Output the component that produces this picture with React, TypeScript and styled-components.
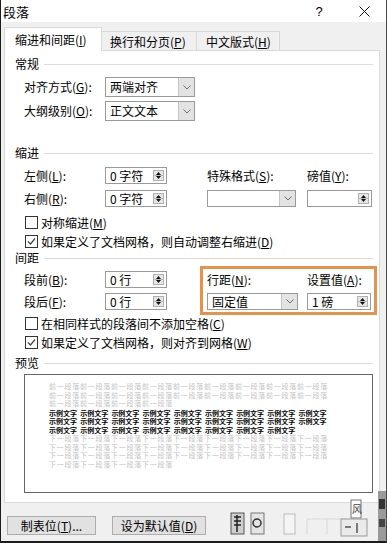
import React from "react";
import styled, { createGlobalStyle, css } from "styled-components";

const GlobalStyle = createGlobalStyle`
  html, body { margin: 0; padding: 0; background: #fff; }
  body { font-family: "Noto Sans CJK SC", "Noto Sans", sans-serif; }
`;

const Window = styled.div`
  width: 387px;
  height: 543px;
  box-sizing: border-box;
  border-left: 1px solid #1c1c1c;
  border-right: 1px solid #4a4a4a;
  border-bottom: 2px solid #1c1c1c;
  background: #f0f0f0;
  display: flex;
  flex-direction: column;
  overflow: hidden;
  font-family: "Noto Sans CJK SC", "Noto Sans", sans-serif;
  font-size: 12px;
  color: #000;
`;

const TitleBar = styled.div`
  height: 22px;
  flex: none;
  background: #fff;
  display: flex;
  align-items: center;
  padding-left: 2px;
  font-size: 13px;
`;

const TitleText = styled.span`
  flex: 1;
`;

const TitleButton = styled.div<{ $w: number }>`
  width: ${(p) => p.$w}px;
  height: 22px;
  display: flex;
  align-items: center;
  justify-content: center;
  font-size: 13px;
  font-family: "Liberation Sans", sans-serif;
`;

const Body = styled.div`
  flex: 1;
  display: flex;
  flex-direction: column;
  padding: 5px 6px 0 3px;
  position: relative;
`;

const TabRow = styled.div`
  display: flex;
  align-items: flex-end;
  height: 24px;
  margin-bottom: -1px;
  position: relative;
  z-index: 1;
`;

const Tab = styled.div<{ $active?: boolean; $w: number; $pl: number }>`
  box-sizing: border-box;
  width: ${(p) => p.$w}px;
  padding-left: ${(p) => p.$pl}px;
  display: flex;
  align-items: center;
  white-space: nowrap;
  ${(p) =>
    p.$active
      ? css`
          height: 24px;
          background: #fff;
          border: 1px solid #d9d9d9;
          border-bottom: none;
        `
      : css`
          height: 19px;
          margin-bottom: 1px;
          background: #f0f0f0;
          border-top: 1px solid #d9d9d9;
          border-right: 1px solid #d9d9d9;
        `}
`;

const Panel = styled.div`
  height: 453px;
  box-sizing: border-box;
  background: #fff;
  border: 1px solid #d9d9d9;
  padding: 6px 6px 0 10px;
  display: flex;
  flex-direction: column;
`;

const SectionTitle = styled.div<{ $mt?: number }>`
  display: flex;
  align-items: center;
  gap: 5px;
  height: 14px;
  line-height: 14px;
  margin-top: ${(p) => p.$mt ?? 0}px;
  &::after {
    content: "";
    flex: 1;
    height: 1px;
    background: #dcdcdc;
  }
`;

const FormGrid = styled.div<{ $row: number; $gap: number; $mt: number }>`
  display: grid;
  grid-template-columns: 81px 102px 100px 65px;
  grid-auto-rows: ${(p) => p.$row}px;
  row-gap: ${(p) => p.$gap}px;
  align-items: center;
  margin: ${(p) => p.$mt}px 0 0 9px;
  position: relative;
`;

const Label = styled.div`
  white-space: nowrap;
  line-height: 14px;
`;

const Field = styled.div<{ $w: number }>`
  width: ${(p) => p.$w}px;
  height: 100%;
  box-sizing: border-box;
  border: 1px solid #9a9a9a;
  background: #fff;
  display: flex;
  align-items: center;
`;

const FieldValue = styled.span`
  flex: 1;
  padding-left: 4px;
  white-space: pre;
  line-height: 14px;
`;

const DropButton = styled.div`
  width: 15px;
  align-self: stretch;
  background: #e3e3e3;
  border-left: 1px solid #c4c4c4;
  display: flex;
  align-items: center;
  justify-content: center;
`;

const SpinButtons = styled.div`
  width: 11px;
  height: 11px;
  margin-right: 2px;
  border: 1px solid #b0b0b0;
  background: #e6e6e6;
  display: flex;
  flex-direction: column;
  align-items: center;
  justify-content: space-around;
  box-sizing: border-box;
  padding: 1px 0;
  position: relative;
  &::after {
    content: "";
    position: absolute;
    left: 0;
    right: 0;
    top: 4px;
    height: 1px;
    background: #b8b8b8;
  }
`;

/* orange annotation drawn over the line-spacing controls */
const Highlight = styled.div`
  position: absolute;
  left: 176px;
  top: -5px;
  width: 177px;
  height: 49px;
  box-sizing: border-box;
  border: 3px solid #e8914a;
  pointer-events: none;
`;

const CheckRow = styled.label<{ $mt?: number }>`
  display: flex;
  align-items: center;
  height: 16px;
  margin: ${(p) => p.$mt ?? 3}px 0 0 10px;
  white-space: nowrap;
`;

const Box = styled.span`
  width: 13px;
  height: 13px;
  box-sizing: border-box;
  border: 1px solid #333;
  background: #fff;
  margin-right: 3px;
  display: flex;
  align-items: center;
  justify-content: center;
`;

const Preview = styled.div`
  margin: 4px 0 0 9px;
  height: 119px;
  box-sizing: border-box;
  border: 1px solid #666;
  background: #fff;
  padding: 7px 0 0 24px;
  font-size: 7px;
  line-height: 8.5px;
  white-space: nowrap;
`;

const PreviewLine = styled.div<{ $tone: "dim" | "ink"; $mt?: number }>`
  color: ${(p) => (p.$tone === "dim" ? "#c4c4c4" : "#000")};
  letter-spacing: ${(p) => (p.$tone === "dim" ? 0.75 : 0)}px;
  margin-top: ${(p) => p.$mt ?? 0}px;
  display: flex;
`;

const Sample = styled.span`
  width: 31.2px;
  flex: none;
  font-weight: 700;
`;

const Footer = styled.div`
  display: flex;
  align-items: center;
  gap: 16px;
  padding: 13px 0 0 3px;
`;

const FooterButton = styled.div<{ $w: number }>`
  width: ${(p) => p.$w}px;
  height: 19px;
  box-sizing: border-box;
  background: #e1e1e1;
  border: 1px solid #adadad;
  display: flex;
  align-items: center;
  justify-content: center;
  white-space: nowrap;
`;

const Artifact = styled.svg`
  position: absolute;
  right: -6px;
  bottom: 0;
`;

function Key({ k }: { k: string }) {
  return (
    <>
      (<u>{k}</u>)
    </>
  );
}

function Chevron() {
  return (
    <svg width="8" height="5" viewBox="0 0 8 5">
      <polyline points="0.5,0.5 4,4 7.5,0.5" fill="none" stroke="#6d6d6d" strokeWidth="1" />
    </svg>
  );
}

function Select({ w, value = "" }: { w: number; value?: string }) {
  return (
    <Field $w={w}>
      <FieldValue>{value}</FieldValue>
      <DropButton>
        <Chevron />
      </DropButton>
    </Field>
  );
}

function Spin({ w, value = "" }: { w: number; value?: string }) {
  return (
    <Field $w={w}>
      <FieldValue>{value}</FieldValue>
      <SpinButtons>
        <svg width="5" height="3" viewBox="0 0 5 3">
          <polygon points="2.5,0 5,3 0,3" fill="#111" />
        </svg>
        <svg width="5" height="3" viewBox="0 0 5 3">
          <polygon points="0,0 5,0 2.5,3" fill="#111" />
        </svg>
      </SpinButtons>
    </Field>
  );
}

function Check({ checked, children, mt }: { checked?: boolean; children: React.ReactNode; mt?: number }) {
  return (
    <CheckRow $mt={mt}>
      <Box>
        {checked && (
          <svg width="11" height="11" viewBox="0 0 11 11">
            <polyline points="2,5.5 4.5,8 9,2.5" fill="none" stroke="#444" strokeWidth="1.2" />
          </svg>
        )}
      </Box>
      {children}
    </CheckRow>
  );
}

const before = "前一段落".repeat(9);
const after = "下一段落".repeat(9);

export default function App() {
  return (
    <>
      <GlobalStyle />
      <Window>
        <TitleBar>
          <TitleText>段落</TitleText>
          <TitleButton $w={46}>?</TitleButton>
          <TitleButton $w={44}>
            <svg width="11" height="11" viewBox="0 0 11 11">
              <path d="M0.5 0.5 L10.5 10.5 M10.5 0.5 L0.5 10.5" stroke="#111" strokeWidth="1" />
            </svg>
          </TitleButton>
        </TitleBar>
        <Body>
          <TabRow>
            <Tab $active $w={98} $pl={10}>
              缩进和间距<Key k="I" />
            </Tab>
            <Tab $w={95} $pl={8}>
              换行和分页<Key k="P" />
            </Tab>
            <Tab $w={83} $pl={9}>
              中文版式<Key k="H" />
            </Tab>
          </TabRow>
          <Panel>
            <SectionTitle>常规</SectionTitle>
            <FormGrid $row={20} $gap={4} $mt={6}>
              <Label>
                对齐方式<Key k="G" />:
              </Label>
              <Select w={90} value="两端对齐" />
              <span />
              <span />
              <Label>
                大纲级别<Key k="O" />:
              </Label>
              <Select w={90} value="正文文本" />
            </FormGrid>

            <SectionTitle $mt={25}>缩进</SectionTitle>
            <FormGrid $row={17} $gap={6} $mt={7}>
              <Label>
                左侧<Key k="L" />:
              </Label>
              <Spin w={62} value="0 字符" />
              <Label>
                特殊格式<Key k="S" />:
              </Label>
              <Label>
                磅值<Key k="Y" />:
              </Label>
              <Label>
                右侧<Key k="R" />:
              </Label>
              <Spin w={62} value="0 字符" />
              <Select w={89} />
              <Spin w={65} />
            </FormGrid>
            <Check mt={7}>
              对称缩进<Key k="M" />
            </Check>
            <Check checked>
              如果定义了文档网格，则自动调整右缩进<Key k="D" />
            </Check>

            <SectionTitle $mt={2}>间距</SectionTitle>
            <FormGrid $row={17} $gap={5} $mt={6}>
              <Label>
                段前<Key k="B" />:
              </Label>
              <Spin w={62} value="0 行" />
              <Label>
                行距<Key k="N" />:
              </Label>
              <Label>
                设置值<Key k="A" />:
              </Label>
              <Label>
                段后<Key k="F" />:
              </Label>
              <Spin w={62} value="0 行" />
              <Select w={91} value="固定值" />
              <Spin w={64} value="1 磅" />
              <Highlight />
            </FormGrid>
            <Check mt={5}>
              在相同样式的段落间不添加空格<Key k="C" />
            </Check>
            <Check checked>
              如果定义了文档网格，则对齐到网格<Key k="W" />
            </Check>

            <SectionTitle $mt={6}>预览</SectionTitle>
            <Preview>
              <PreviewLine $tone="dim">{before}</PreviewLine>
              <PreviewLine $tone="dim">{before}</PreviewLine>
              <PreviewLine $tone="dim">{"前一段落".repeat(4)}</PreviewLine>
              <PreviewLine $tone="ink" $mt={1}>
                {Array.from({ length: 9 }, (_, i) => (
                  <Sample key={i}>示例文字</Sample>
                ))}
              </PreviewLine>
              <PreviewLine $tone="ink">
                {Array.from({ length: 9 }, (_, i) => (
                  <Sample key={i}>示例文字</Sample>
                ))}
              </PreviewLine>
              <PreviewLine $tone="ink">
                {Array.from({ length: 8 }, (_, i) => (
                  <Sample key={i}>示例文字</Sample>
                ))}
              </PreviewLine>
              <PreviewLine $tone="dim">{after}</PreviewLine>
              <PreviewLine $tone="dim">{after}</PreviewLine>
              <PreviewLine $tone="dim">{after}</PreviewLine>
              <PreviewLine $tone="dim">{"下一段落".repeat(4)}</PreviewLine>
            </Preview>
          </Panel>
          <Footer>
            <FooterButton $w={89}>
              制表位<Key k="T" />...
            </FooterButton>
            <FooterButton $w={94}>
              设为默认值<Key k="D" />
            </FooterButton>
          </Footer>
          <Artifact width="165" height="50" viewBox="0 0 165 50">
            <rect x="4" y="22" width="13" height="21" fill="#cfcfcf" stroke="#555" />
            <path d="M7 26 h7 M7 30 h7 M7 34 h7 M10 24 v17" stroke="#222" strokeWidth="1.5" />
            <rect x="24" y="22" width="13" height="21" fill="#e4e4e4" stroke="#777" />
            <circle cx="30" cy="32" r="4" fill="none" stroke="#333" strokeWidth="1.5" />
            <rect x="57" y="23" width="11" height="20" fill="#f4f4f4" stroke="#bbb" />
            <path d="M80 28 v15 M100 28 v15 M80 28 h40" stroke="#d8d8d8" />
            <rect x="124" y="9" width="10" height="18" fill="#fafafa" stroke="#777" />
            <text x="125" y="22" fontSize="10" fill="#444" fontFamily="Noto Sans CJK SC">风</text>
            <rect x="114" y="28" width="26" height="17" fill="#eaeaea" stroke="#999" />
            <path d="M118 36 h6 M130 32 v10" stroke="#555" strokeWidth="1.5" />
            <rect x="151" y="0" width="8" height="50" fill="#9a9a9a" />
            <rect x="152" y="8" width="6" height="10" fill="#333" />
            <rect x="152" y="28" width="6" height="8" fill="#444" />
            <rect x="159" y="0" width="6" height="50" fill="#f6f6f6" />
          </Artifact>
        </Body>
      </Window>
    </>
  );
}
